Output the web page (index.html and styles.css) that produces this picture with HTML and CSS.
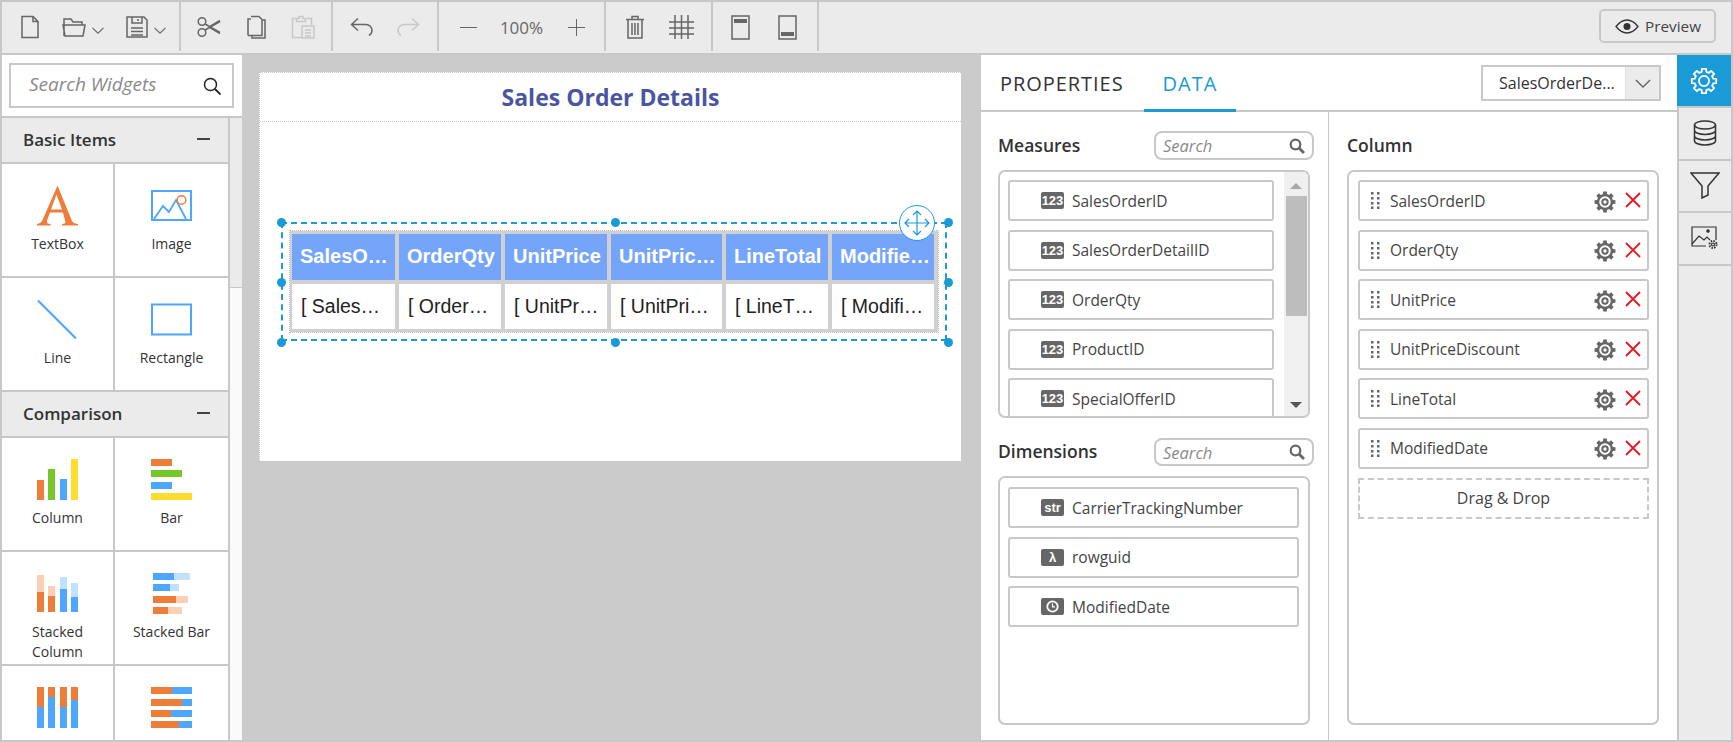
FILE: index.html
```html
<!DOCTYPE html>
<html lang="en">
<head>
<meta charset="utf-8">
<title>Sales Order Details</title>
<link rel="stylesheet" href="styles.css">
</head>
<body>
<svg class="defs" aria-hidden="true">
  <symbol id="gear" viewBox="-13 -13 26 26"><polygon points="-2,-11.33 2,-11.33 2.13,-8.54 4.53,-7.54 6.6,-9.42 9.42,-6.6 7.54,-4.53 8.54,-2.13 11.33,-2 11.33,2 8.54,2.13 7.54,4.53 9.42,6.6 6.6,9.42 4.53,7.54 2.13,8.54 2,11.33 -2,11.33 -2.13,8.54 -4.53,7.54 -6.6,9.42 -9.42,6.6 -7.54,4.53 -8.54,2.13 -11.33,2 -11.33,-2 -8.54,-2.13 -7.54,-4.53 -9.42,-6.6 -6.6,-9.42 -4.53,-7.54 -2.13,-8.54" fill="#666"/><circle r="6.200" fill="#fff"/><circle r="4" fill="#666"/><circle r="1.800" fill="#fff"/></symbol>
  <symbol id="close" viewBox="0 0 16 16"><path d="M1 1l14 14M15 1L1 15" stroke="#f0141e" stroke-width="1.800" fill="none"/></symbol>
  <symbol id="grip" viewBox="0 0 9 17"><path d="M0 0h2.500v2.500H0zM6 0h2.500v2.500H6zM0 5h2.500v2.500H0zM6 5h2.500v2.500H6zM0 10h2.500v2.500H0zM6 10h2.500v2.500H6zM0 14.500h2.500V17H0zM6 14.500h2.500V17H6z" fill="#666"/></symbol>
  <symbol id="mag" viewBox="0 0 16 16"><circle cx="6.500" cy="6.500" r="4.800" fill="none" stroke="#666" stroke-width="2.200"/><path d="M10 10l5 5" stroke="#666" stroke-width="2.800"/></symbol>
  <symbol id="chev" viewBox="0 0 12 7"><path d="M.5.8L6 6.200 11.500.8" fill="none" stroke="#666" stroke-width="1.100"/></symbol>
</svg>
<div class="app">
  <header class="toolbar">
    <div class="tool-group g1">
      <svg class="ico" width="20" height="24" viewBox="0 0 20 24"><path d="M2 1.500h11l5 5v16H2zM13 1.500v5h5"/></svg>
      <span class="drop">
        <svg class="ico" width="24" height="22" viewBox="0 0 24 22"><path d="M2 20V3h7l2 3h9v3M1 9h22l-2 11H3z"/></svg>
        <svg class="chevron" width="12" height="7"><use href="#chev"/></svg>
      </span>
      <span class="drop">
        <svg class="ico" width="22" height="24" viewBox="0 0 22 24"><path d="M1 2h17l3 3v17H1zM6 2v6h10V2M12 4v2M5 13h12M5 16.500h12M5 20h12"/></svg>
        <svg class="chevron" width="12" height="7"><use href="#chev"/></svg>
      </span>
    </div>
    <div class="tool-group g2">
      <svg class="ico" width="24" height="22" viewBox="0 0 24 22"><circle cx="5" cy="5.500" r="3.800"/><circle cx="5" cy="16.500" r="3.800"/><path d="M8 8l15 8.500M8 14l15-8.500M12 11l11 6.500M12 11l11-6.500"/></svg>
      <svg class="ico" width="20" height="24" viewBox="0 0 20 24"><path d="M2 20.500V4h3M6 1.500h7l3 3v16H2M5 1.500h8M16 5h3v18H6v-2.500"/></svg>
      <svg class="ico off" width="24" height="24" viewBox="0 0 24 24"><path d="M6 3.500H1.500v19H11M16 3.500h4.500V10M8 1.500h4v2h2.500v3h-9v-3H8zM11 11h12v12H11zM14 15h6M14 18h6M14 21h6"/></svg>
    </div>
    <div class="tool-group g3">
      <svg class="ico" width="24" height="20" viewBox="0 0 24 20"><path d="M8 1.500L1.500 7.500 8 13.500M1.500 7.500H16a6 6 0 0 1 6 6v0a6 6 0 0 1-3 5"/></svg>
      <svg class="ico off" width="24" height="20" viewBox="0 0 24 20"><path d="M16 1.500l6.500 6L16 13.500M22.500 7.500H8a6 6 0 0 0-6 6v0a6 6 0 0 0 3 5"/></svg>
    </div>
    <div class="tool-group g4">
      <svg class="ico thin" width="17" height="17" viewBox="0 0 17 17"><path d="M0 8.500h17"/></svg>
      <span class="zoom">100%</span>
      <svg class="ico thin" width="17" height="17" viewBox="0 0 17 17"><path d="M0 8.500h17M8.500 0v17"/></svg>
    </div>
    <div class="tool-group g5">
      <svg class="ico" width="18" height="24" viewBox="0 0 18 24"><path d="M2 5v18h14V5M0 4.500h18M6 4V1.500h6V4M6 8v12M9 8v12M12 8v12"/></svg>
      <svg class="ico" width="25" height="24" viewBox="0 0 25 24"><path d="M0 7h25M0 13h25M0 19h25M6 0v24M12.500 0v24M19 0v24"/></svg>
    </div>
    <div class="tool-group g6">
      <svg class="ico" width="19" height="25" viewBox="0 0 19 25"><path d="M1 1h17v23H1z"/><path class="solid" d="M3 4h13v4H3z"/></svg>
      <svg class="ico" width="19" height="25" viewBox="0 0 19 25"><path d="M1 1h17v23H1z"/><path class="solid" d="M3 17h13v4H3z"/></svg>
    </div>
    <div class="tool-end">
      <button class="preview">
        <svg class="eye" width="24" height="15" viewBox="0 0 24 15"><path d="M1 7.500C5 2.500 8.500 1 12 1s7 1.500 11 6.500C19 12.500 15.500 14 12 14S5 12.500 1 7.500z" fill="none" stroke="#333" stroke-width="1.300"/><circle cx="12" cy="7.500" r="3.500" fill="#333"/></svg>
        Preview
      </button>
    </div>
  </header>

  <div class="workspace">
    <aside class="widgets">
      <div class="widget-search">
        <span class="widget-search-text">Search Widgets</span>
        <svg width="18" height="18" viewBox="0 0 18 18"><circle cx="7.500" cy="7.500" r="6" fill="none" stroke="#222" stroke-width="1.500"/><path d="M12 12l5.500 5.500" stroke="#222" stroke-width="1.800"/></svg>
      </div>
      <div class="widget-scroll">
        <div class="widget-list">
          <div class="cat-head"><span>Basic Items</span><i class="cat-minus"></i></div>
          <div class="tiles">
            <div class="tile"><svg width="41" height="40" viewBox="0 0 41 40"><path d="M20.500 0L35 35.500q1.500 2.500 6 3V40H25v-1.500q4.500 0 3-3.500l-2-8H13l-3 8q-1 3.500 3.500 3.500V40H0v-1.500q4-.5 5.500-4zM14 24h11l-5.500-15z" fill="#ef7d3a" fill-rule="evenodd"/></svg><span>TextBox</span></div>
            <div class="tile"><svg width="41" height="31" viewBox="0 0 41 31"><path d="M1 1h39v29H1z" fill="none" stroke="#4da6ff" stroke-width="2"/><path d="M3 29l9-13 6 6 7-12 10 19" fill="none" stroke="#4da6ff" stroke-width="1.800"/><circle cx="30.500" cy="10" r="4.300" fill="none" stroke="#ef7d3a" stroke-width="1.500"/></svg><span>Image</span></div>
            <div class="tile"><svg width="41" height="40" viewBox="0 0 41 40"><path d="M1 1l38 38" stroke="#4da6ff" stroke-width="2.200"/></svg><span>Line</span></div>
            <div class="tile"><svg width="41" height="32" viewBox="0 0 41 32"><path d="M1 1h39v30H1z" fill="none" stroke="#4da6ff" stroke-width="2"/></svg><span>Rectangle</span></div>
          </div>
          <div class="cat-head"><span>Comparison</span><i class="cat-minus"></i></div>
          <div class="tiles">
            <div class="tile"><svg width="41" height="41" viewBox="0 0 41 41"><path class="c-o" d="M0 21h7v20H0z"/><path class="c-g" d="M11 10h7v31h-7z"/><path class="c-b" d="M23 20h7v21h-7z"/><path class="c-y" d="M34 0h7v41h-7z"/></svg><span>Column</span></div>
            <div class="tile"><svg width="41" height="41" viewBox="0 0 41 41"><path class="c-o" d="M0 0h21v7H0z"/><path class="c-g" d="M0 11h31v7H0z"/><path class="c-b" d="M0 23h21v7H0z"/><path class="c-y" d="M0 34h41v7H0z"/></svg><span>Bar</span></div>
            <div class="tile"><svg width="41" height="41" viewBox="0 0 41 41"><path class="c-ol" d="M0 2h7v17H0zM11 13h7v10h-7z"/><path class="c-bl" d="M23 4h7v12h-7zM34 10h7v14h-7z"/><path class="c-o" d="M0 19h7v20H0zM11 23h7v16h-7z"/><path class="c-b" d="M23 16h7v23h-7zM34 24h7v15h-7z"/></svg><span>Stacked Column</span></div>
            <div class="tile"><svg width="41" height="41" viewBox="0 0 41 41"><path class="c-bl" d="M23 0h16v7H23zM19 11h9v7h-9z"/><path class="c-ol" d="M25 23h12v7H25zM17 34h14v7H17z"/><path class="c-b" d="M2 0h21v7H2zM2 11h17v7H2z"/><path class="c-o" d="M2 23h23v7H2zM2 34h15v7H2z"/></svg><span>Stacked Bar</span></div>
            <div class="tile"><svg width="41" height="41" viewBox="0 0 41 41"><path class="c-b" d="M0 20h7v21H0zM11 10h7v31h-7zM23 20h7v21h-7zM34 13h7v28h-7z"/><path class="c-o" d="M0 0h7v20H0zM11 0h7v10h-7zM23 0h7v20h-7zM34 0h7v13h-7z"/></svg></div>
            <div class="tile"><svg width="41" height="41" viewBox="0 0 41 41"><path class="c-b" d="M21 0h20v7H21zM31 12h10v7H31zM20 23h21v7H20zM28 34h13v7H28z"/><path class="c-o" d="M0 0h21v7H0zM0 12h31v7H0zM0 23h20v7H0zM0 34h28v7H0z"/></svg></div>
          </div>
        </div>
        <div class="widget-scrollbar"><div class="widget-thumb"></div></div>
      </div>
    </aside>

    <main class="canvas">
      <section class="page">
        <h1 class="page-title">Sales Order Details</h1>
        <div class="report-item">
          <div class="report-grid">
            <div class="th">SalesO…</div><div class="th">OrderQty</div><div class="th">UnitPrice</div><div class="th">UnitPric…</div><div class="th">LineTotal</div><div class="th">Modifie…</div>
            <div class="td">[ Sales…</div><div class="td">[ Order…</div><div class="td">[ UnitPr…</div><div class="td">[ UnitPri…</div><div class="td">[ LineT…</div><div class="td">[ Modifi…</div>
          </div>
          <i class="handle h-tl"></i><i class="handle h-tc"></i><i class="handle h-tr"></i>
          <i class="handle h-ml"></i><i class="handle h-mr"></i>
          <i class="handle h-bl"></i><i class="handle h-bc"></i><i class="handle h-br"></i>
          <div class="move">
            <svg width="26" height="26" viewBox="0 0 26 26"><path d="M13 1v24M1 13h24M9 5l4-4 4 4M9 21l4 4 4-4M5 9l-4 4 4 4M21 9l4 4-4 4" fill="none" stroke="#1a9bd7" stroke-width="1.200"/></svg>
          </div>
        </div>
      </section>
    </main>

    <section class="props">
      <div class="tabbar">
        <span class="tab">PROPERTIES</span>
        <span class="tab active">DATA</span>
        <div class="ds-select">
          <span class="ds-text">SalesOrderDe...</span>
          <span class="ds-arrow"><svg width="16" height="9"><use href="#chev"/></svg></span>
        </div>
      </div>
      <div class="data-body">
        <div class="data-col left-col">
          <div class="sec-head">
            <h2>Measures</h2>
            <div class="mini-search"><span>Search</span><svg width="16" height="16"><use href="#mag"/></svg></div>
          </div>
          <div class="field-box measures">
            <div class="field-list">
              <div class="field"><b class="type">123</b>SalesOrderID</div>
              <div class="field"><b class="type">123</b>SalesOrderDetailID</div>
              <div class="field"><b class="type">123</b>OrderQty</div>
              <div class="field"><b class="type">123</b>ProductID</div>
              <div class="field"><b class="type">123</b>SpecialOfferID</div>
            </div>
            <div class="vscroll"><i class="arr-up"></i><div class="vthumb"></div><i class="arr-down"></i></div>
          </div>
          <div class="sec-head second">
            <h2>Dimensions</h2>
            <div class="mini-search"><span>Search</span><svg width="16" height="16"><use href="#mag"/></svg></div>
          </div>
          <div class="field-box grow stack">
            <div class="field"><b class="type">str</b>CarrierTrackingNumber</div>
            <div class="field"><b class="type">λ</b>rowguid</div>
            <div class="field"><b class="type"><svg width="13" height="13" viewBox="0 0 13 13"><circle cx="6.500" cy="6.500" r="5.200" fill="none" stroke="#fff" stroke-width="1.800"/><path d="M6.500 3.500v3.300h2.500" fill="none" stroke="#fff" stroke-width="1.200"/></svg></b>ModifiedDate</div>
          </div>
        </div>
        <div class="data-col right-col">
          <div class="sec-head"><h2>Column</h2></div>
          <div class="field-box grow stack">
            <div class="field col-field"><svg class="grip" width="9" height="17"><use href="#grip"/></svg><span class="col-name">SalesOrderID</span><svg class="cog" width="24" height="24"><use href="#gear"/></svg><svg class="x" width="16" height="16"><use href="#close"/></svg></div>
            <div class="field col-field"><svg class="grip" width="9" height="17"><use href="#grip"/></svg><span class="col-name">OrderQty</span><svg class="cog" width="24" height="24"><use href="#gear"/></svg><svg class="x" width="16" height="16"><use href="#close"/></svg></div>
            <div class="field col-field"><svg class="grip" width="9" height="17"><use href="#grip"/></svg><span class="col-name">UnitPrice</span><svg class="cog" width="24" height="24"><use href="#gear"/></svg><svg class="x" width="16" height="16"><use href="#close"/></svg></div>
            <div class="field col-field"><svg class="grip" width="9" height="17"><use href="#grip"/></svg><span class="col-name">UnitPriceDiscount</span><svg class="cog" width="24" height="24"><use href="#gear"/></svg><svg class="x" width="16" height="16"><use href="#close"/></svg></div>
            <div class="field col-field"><svg class="grip" width="9" height="17"><use href="#grip"/></svg><span class="col-name">LineTotal</span><svg class="cog" width="24" height="24"><use href="#gear"/></svg><svg class="x" width="16" height="16"><use href="#close"/></svg></div>
            <div class="field col-field"><svg class="grip" width="9" height="17"><use href="#grip"/></svg><span class="col-name">ModifiedDate</span><svg class="cog" width="24" height="24"><use href="#gear"/></svg><svg class="x" width="16" height="16"><use href="#close"/></svg></div>
            <div class="drop-zone">Drag &amp; Drop</div>
          </div>
        </div>
      </div>
    </section>

    <nav class="rail">
      <div class="rail-btn active"><svg width="28" height="28" viewBox="-13 -13 26 26"><polygon points="-2,-11.33 2,-11.33 2.13,-8.54 4.53,-7.54 6.6,-9.42 9.42,-6.6 7.54,-4.53 8.54,-2.13 11.33,-2 11.33,2 8.54,2.13 7.54,4.53 9.42,6.6 6.6,9.42 4.53,7.54 2.13,8.54 2,11.33 -2,11.33 -2.13,8.54 -4.53,7.54 -6.6,9.42 -9.42,6.6 -7.54,4.53 -8.54,2.13 -11.33,2 -11.33,-2 -8.54,-2.13 -7.54,-4.53 -9.42,-6.6 -6.6,-9.42 -4.53,-7.54 -2.13,-8.54" fill="none" stroke="#fff" stroke-width="1.700" stroke-linejoin="round"/><circle r="4.700" fill="none" stroke="#fff" stroke-width="1.700"/></svg></div>
      <div class="rail-btn"><svg class="ico dark" width="24" height="26" viewBox="0 0 24 26"><ellipse cx="12" cy="5" rx="10.500" ry="4"/><path d="M1.500 5v16c0 2.200 4.700 4 10.500 4s10.500-1.800 10.500-4V5M1.500 10.500c0 2.200 4.700 4 10.500 4s10.500-1.800 10.500-4M1.500 16c0 2.200 4.700 4 10.500 4s10.500-1.800 10.500-4"/></svg></div>
      <div class="rail-btn"><svg class="ico dark" width="30" height="27" viewBox="0 0 30 27"><path d="M1 1h28L18 14v9l-6 3V14z"/></svg></div>
      <div class="rail-btn"><svg class="ico dark small" width="28" height="24" viewBox="0 0 28 24"><path d="M15 20H1V1h24v13"/><path d="M1 18l7-8 5 4 3-3 3 3"/><circle cx="17" cy="5" r="1.200" fill="#333"/><circle cx="22" cy="18.500" r="1.500"/><circle class="cog-teeth" cx="22" cy="18.500" r="3.500"/></svg></div>
    </nav>
  </div>
</div>
</body>
</html>
```

FILE: styles.css
```css
* { box-sizing: border-box; }
html, body { margin: 0; padding: 0; }
body { font-family: "Open Sans", "Noto Sans", sans-serif; color: #333; background: #fff; overflow: hidden; }
.defs { position: absolute; width: 0; height: 0; }
.app { width: 1733px; height: 742px; border: 2px solid #c8c8c8; display: flex; flex-direction: column; overflow: hidden; }

/* toolbar */
.toolbar { height: 53px; flex: none; display: flex; background: #ebebeb; border-bottom: 2px solid #c8c8c8; }
.tool-group { height: 49px; display: flex; align-items: center; border-right: 2px solid #c8c8c8; flex: none; padding-top: 1px; }
.g1 { width: 179px; padding-left: 18px; gap: 22px; }
.g2 { width: 152px; padding-left: 16px; gap: 25px; }
.g3 { width: 106px; padding-left: 17px; gap: 22px; }
.g4 { width: 167px; padding-left: 21px; justify-content: flex-start; }
.g5 { width: 107px; padding-left: 20px; gap: 25px; }
.g6 { width: 106px; padding-left: 18px; gap: 28px; }
.tool-end { flex: 1; display: flex; justify-content: flex-end; align-items: flex-start; padding: 7px 15px 0 0; }
.drop { display: flex; align-items: center; gap: 6px; }
.chevron { margin-top: 6px; }
.ico { fill: none; stroke: #666; stroke-width: 1.500; flex: none; }
.ico.off { stroke: #c8c8c8; }
.ico.thin { stroke-width: 1; }
.ico.dark { stroke: #333; }
.ico.small { stroke-width: 1.200; }
.ico .solid { fill: #666; stroke: none; }
.cog-teeth { stroke-width: 2; stroke-dasharray: 1.500 1.250; }
.zoom { font-family: "Open Sans", sans-serif; font-size: 17px; color: #666; width: 91px; padding-right: 2px; text-align: center; }
.preview { width: 117px; height: 34px; border: 2px solid #c8c8c8; border-radius: 5px; background: #ebebeb; font: 15.300px "Open Sans", sans-serif; color: #444; display: flex; align-items: center; gap: 6px; padding: 0 0 0 14px; }

/* workspace */
.workspace { flex: 1; min-height: 0; display: flex; }

/* widgets */
.widgets { width: 240px; flex: none; background: #fff; display: flex; flex-direction: column; min-height: 0; }
.widget-search { margin: 8px 8px 0 7px; height: 45px; flex: none; border: 2px solid #c8c8c8; display: flex; align-items: center; justify-content: space-between; padding: 0 11px 0 18px; }
.widget-search-text { font-size: 19px; font-style: italic; color: #8a8a8a; margin-bottom: 4px; }
.widget-scroll { margin-top: 8px; flex: 1; min-height: 0; display: flex; overflow: hidden; border-top: 2px solid #c8c8c8; }
.widget-list { width: 228px; flex: none; border-right: 2px solid #c8c8c8; }
.cat-head { height: 46px; background: #ebebeb; border-bottom: 2px solid #c8c8c8; display: flex; align-items: center; justify-content: space-between; padding: 0 18px 2px 21px; font-size: 17px; font-weight: 600; color: #333; }
.cat-minus { width: 13px; height: 2px; background: #444; }
.tiles { display: grid; grid-template-columns: 113px 113px; }
.tile { height: 114px; padding-top: 21px; display: flex; flex-direction: column; align-items: center; text-align: center; font-size: 14px; line-height: 20px; color: #333; border-bottom: 2px solid #c8c8c8; }
.tile:nth-child(odd) { border-right: 2px solid #c8c8c8; }
.tile svg { height: 41px; flex: none; margin-bottom: 8px; }
.tile span { width: 90px; }
.widget-scrollbar { flex: 1; background: #fafafa; }
.widget-thumb { height: 170px; background: #ebebeb; border-bottom: 1px solid #c8c8c8; }
.c-o { fill: #ef7d3a; }
.c-g { fill: #76c72a; }
.c-b { fill: #4da6ff; }
.c-y { fill: #ffdc2e; }
.c-ol { fill: #f9cfb6; }
.c-bl { fill: #c2e0ff; }

/* canvas */
.canvas { width: 739px; flex: none; background: #cbcbcb; padding: 17px; border-right: 1px solid #c8c8c8; }
.page { width: 702px; height: 389px; background: #fff; position: relative; border-top: 1px dotted #c4c4c4; border-left: 1px dotted #c4c4c4; }
.page-title { margin: 0; height: 49px; border-bottom: 1px dotted #c4c4c4; text-align: center; font-size: 23px; line-height: 48px; font-weight: 700; color: #4a55a2; }
.report-item { position: absolute; left: 21px; top: 149px; width: 666px; height: 119px; border: 2px dashed #1a9bd7; padding: 7px 0 0 7px; }
.report-grid { width: 648px; height: 101px; display: grid; grid-template-columns: 103px 102px 102px 111px 102px 102px; grid-template-rows: 46px 45px; gap: 4px; padding: 3px 4px 3px 2px; background: #d0d0d0; outline: 1px dotted #bbb; font-family: "Liberation Sans", Arial, sans-serif; }
.th, .td { white-space: nowrap; line-height: 44px; }
.th { background: #75a5fa; color: #fff; font-weight: 700; font-size: 20px; padding-left: 8px; }
.td { background: #fff; color: #222; font-size: 19.500px; padding-left: 9px; }
.handle { position: absolute; width: 9px; height: 9px; border-radius: 50%; background: #1a9bd7; }
.h-tl { left: -6px; top: -6px; }
.h-tc { left: 328px; top: -6px; }
.h-tr { right: -8px; top: -6px; }
.h-ml { left: -6px; top: 54px; }
.h-mr { right: -8px; top: 54px; }
.h-bl { left: -6px; bottom: -8px; }
.h-bc { left: 328px; bottom: -8px; }
.h-br { right: -8px; bottom: -8px; }
.move { position: absolute; left: 616px; top: -19px; width: 36px; height: 36px; border-radius: 50%; border: 1px solid #1a9bd7; background: #fff; display: flex; align-items: center; justify-content: center; }

/* properties */
.props { width: 696px; flex: none; display: flex; flex-direction: column; background: #fff; }
.tabbar { height: 57px; flex: none; position: relative; display: flex; align-items: flex-start; border-bottom: 2px solid #c8c8c8; padding-left: 19px; }
.tab { font-size: 20px; font-weight: 500; letter-spacing: .95px; color: #333; line-height: 28px; margin-top: 15px; }
.tab.active { color: #1a9bd7; margin-left: 39px; position: relative; }
.tab.active::after { content: ""; position: absolute; left: -19px; right: -19px; top: 39px; height: 3px; background: #1a9bd7; }
.ds-select { position: absolute; left: 500px; top: 10px; width: 180px; height: 36px; border: 2px solid #c8c8c8; display: flex; }
.ds-text { width: 142px; padding-left: 16px; font-size: 16px; line-height: 32px; color: #333; white-space: nowrap; }
.ds-arrow { flex: 1; background: #ebebeb; display: flex; align-items: center; justify-content: center; border-left: 1px solid #e0e0e0; }
.data-body { flex: 1; min-height: 0; display: flex; }
.data-col { flex: 1; width: 348px; padding: 19px 14px 15px 18px; display: flex; flex-direction: column; min-height: 0; }
.left-col { flex: none; width: 348px; border-right: 1px solid #c8c8c8; padding-left: 17px; }
.sec-head { height: 29px; flex: none; display: flex; align-items: center; justify-content: space-between; margin-bottom: 10px; }
.sec-head.second { margin-top: 20px; height: 28px; }
.sec-head h2 { margin: 0 0 2px; font-size: 17.500px; font-weight: 600; color: #333; }
.mini-search { width: 160px; height: 100%; border: 2px solid #c8c8c8; border-radius: 8px; display: flex; align-items: center; justify-content: space-between; padding: 0 7px; font-size: 16.500px; font-style: italic; color: #8a8a8a; }
.field-box { width: 312px; border: 2px solid #c8c8c8; border-radius: 7px; overflow: hidden; }
.measures { height: 248px; flex: none; display: flex; }
.grow { flex: 1; min-height: 0; }
.stack { padding: 8px 9px 0 8px; display: flex; flex-direction: column; gap: 8.500px; }
.left-col .stack { padding-top: 9px; }
.right-col .stack { padding-left: 9px; padding-right: 8px; }
.field-list { width: 284px; flex: none; padding: 8px 10px 0 8px; display: flex; flex-direction: column; gap: 8.500px; }
.field { height: 41px; flex: none; border: 2px solid #c8c8c8; border-radius: 3px; display: flex; align-items: center; padding-left: 31px; font-size: 15.500px; color: #444; white-space: nowrap; }
.type { width: 23px; height: 17px; flex: none; margin-right: 8px; background: #666; border-radius: 2px; color: #fff; font: 700 13px/17px "Liberation Sans", sans-serif; text-align: center; display: flex; align-items: center; justify-content: center; }
.vscroll { width: 24px; flex: none; background: #f0f0f0; display: flex; flex-direction: column; align-items: center; }
.vthumb { width: 21px; height: 120px; margin-top: 7px; background: #bdbdbd; }
.arr-up, .arr-down { width: 0; height: 0; border-left: 6px solid transparent; border-right: 6px solid transparent; }
.arr-up { margin-top: 11px; border-bottom: 6px solid #a8a8a8; }
.arr-down { margin-top: 86px; border-top: 6px solid #555; }
.col-field { padding-left: 11px; }
.grip { flex: none; margin-right: 10px; }
.col-name { flex: 1; }
.cog { flex: none; margin-top: 2px; }
.x { margin: 0 6px 1px 8px; flex: none; }
.drop-zone { height: 41px; flex: none; margin-top: .5px; border: 2px dashed #c8c8c8; text-align: center; line-height: 36px; font-size: 16px; color: #444; }

/* rail */
.rail { flex: 1; min-width: 0; background: #ebebeb; border-left: 2px solid #c8c8c8; display: flex; flex-direction: column; }
.rail-btn { height: 52.500px; flex: none; display: flex; align-items: center; justify-content: center; border-bottom: 2px solid #c8c8c8; }
.rail-btn.active { background: #1a9bd7; height: 53px; margin-left: -2px; }
```
